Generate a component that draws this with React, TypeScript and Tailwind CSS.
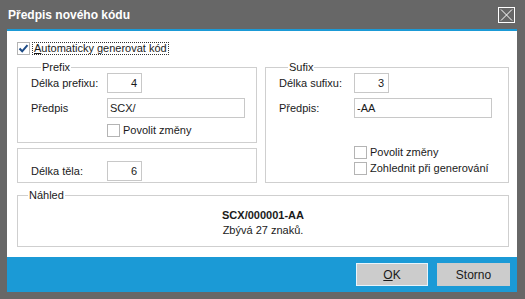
import React from "react";

function Check({ checked = false }: { checked?: boolean }) {
  return (
    <span className="w-[13px] h-[13px] border border-[#b4b4b4] bg-white flex items-center justify-center shrink-0">
      {checked && (
        <svg width="11" height="11" viewBox="0 0 11 11">
          <path d="M1.5 5.5 L4.2 8.3 L9.5 2.2" fill="none" stroke="#1d4b86" strokeWidth="2" />
        </svg>
      )}
    </span>
  );
}

function Input({ value, w, right = false }: { value: string; w: string; right?: boolean }) {
  return (
    <div
      className={`h-[20px] border border-[#c8c8c8] bg-white flex items-center ${w} ${
        right ? "justify-end pr-[4px]" : "pl-[2px]"
      }`}
    >
      {value}
    </div>
  );
}

export default function App() {
  return (
    <div className="w-[525px] h-[299px] bg-[#676767] flex flex-col font-['Liberation_Sans',sans-serif] text-[11px] text-[#1a1a1a] leading-none">
      <div className="h-[29px] shrink-0 flex items-center justify-between pl-[8px] pr-[10px]">
        <span className="text-white font-bold text-[12px] pt-[1px]">Předpis nového kódu</span>
        <span className="w-[17px] h-[16px] border border-white flex items-center justify-center">
          <svg width="13" height="12" viewBox="0 0 13 12">
            <path d="M1 0.5 L12 11.5 M12 0.5 L1 11.5" stroke="white" strokeWidth="1" />
          </svg>
        </span>
      </div>
      <div className="flex-1 flex flex-col ml-[7px] mr-[8px] mb-[7px]">
        <div className="h-[2px] bg-[#1b9ad6] shrink-0" />
        <div className="h-[226px] bg-white pl-[10px] pr-[8px] pt-[11px] flex flex-col">
          <div className="flex items-center h-[13px]">
            <Check checked />
            <span className="ml-[2px] h-[13px] px-[1px] border border-dotted border-[#333] flex items-center">
              <span className="underline">A</span>utomaticky generovat kód
            </span>
          </div>
          <div className="flex gap-[8px] items-start mt-[6px]">
            <div className="flex flex-col gap-[5px] w-[240px]">
              <fieldset className="border border-[#cfcfcf] pl-[13px] pr-[10px] pb-[5px]">
                <legend className="ml-[10px] px-[1px] leading-[12px]">Prefix</legend>
                <div className="flex items-center">
                  <span className="w-[76px]">Délka prefixu:</span>
                  <Input value="4" w="w-[35px]" right />
                </div>
                <div className="flex items-center mt-[5px]">
                  <span className="w-[76px]">Předpis</span>
                  <Input value="SCX/" w="w-[138px]" />
                </div>
                <div className="flex items-center mt-[6px] ml-[76px] h-[13px]">
                  <Check />
                  <span className="ml-[3px]">Povolit změny</span>
                </div>
              </fieldset>
              <div className="border border-[#cfcfcf] pl-[13px] pt-[12px] pb-[1px] flex items-center">
                <span className="w-[76px]">Délka těla:</span>
                <Input value="6" w="w-[35px]" right />
              </div>
            </div>
            <fieldset className="w-[244px] border border-[#cfcfcf] pl-[13px] pr-[15px] pb-[7px]">
              <legend className="ml-[9px] px-[1px] leading-[12px]">Sufix</legend>
              <div className="flex items-center">
                <span className="w-[75px]">Délka sufixu:</span>
                <Input value="3" w="w-[35px]" right />
              </div>
              <div className="flex items-center mt-[5px]">
                <span className="w-[75px]">Předpis:</span>
                <Input value="-AA" w="w-[138px]" />
              </div>
              <div className="flex items-center mt-[28px] ml-[75px] h-[13px]">
                <Check />
                <span className="ml-[3px]">Povolit změny</span>
              </div>
              <div className="flex items-center mt-[3px] ml-[75px] h-[13px]">
                <Check />
                <span className="ml-[3px]">Zohlednit při generování</span>
              </div>
            </fieldset>
          </div>
          <fieldset className="mt-[6px] w-[492px] border border-[#cfcfcf] pt-[6px] pb-[8px] flex flex-col items-center">
            <legend className="ml-[10px] px-[1px] leading-[12px]">Náhled</legend>
            <div className="h-[16px] flex items-center font-bold">SCX/000001-AA</div>
            <div className="h-[15px] flex items-center">Zbývá 27 znaků.</div>
          </fieldset>
        </div>
        <div className="flex-1 bg-[#1b9ad6] flex items-center justify-end gap-[9px] pr-[7px]">
          <button className="w-[72px] h-[23px] bg-[#cccccc] border border-[#e8f4fb] text-[12px] text-[#1a1a1a]">
            <span className="underline">O</span>K
          </button>
          <button className="w-[73px] h-[23px] bg-[#cccccc] border border-[#cccccc] text-[12px] text-[#1a1a1a]">
            Storno
          </button>
        </div>
      </div>
    </div>
  );
}
